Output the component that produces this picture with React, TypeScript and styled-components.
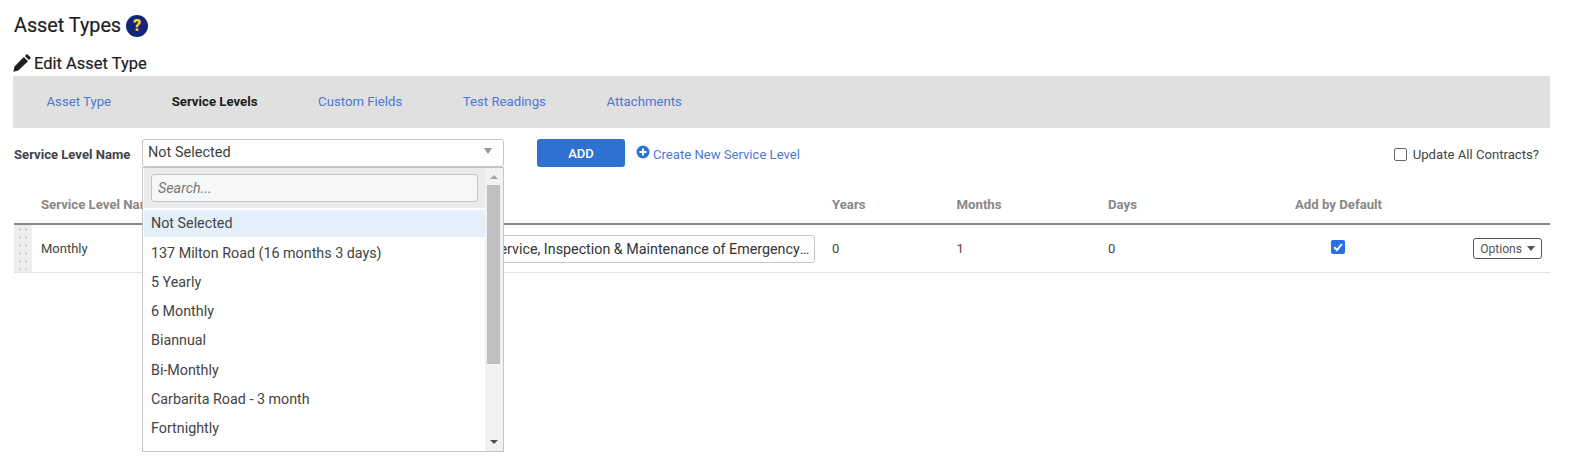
import styled, { createGlobalStyle } from "styled-components";

const tabs = ["Asset Type", "Service Levels", "Custom Fields", "Test Readings", "Attachments"];
const levels = [
  "137 Milton Road (16 months 3 days)",
  "5 Yearly",
  "6 Monthly",
  "Biannual",
  "Bi-Monthly",
  "Carbarita Road - 3 month",
  "Fortnightly",
];

const App = () => {
  return (
    <Page>
      <GlobalStyle />
      <Title>
        Asset Types
        <HelpIcon>?</HelpIcon>
      </Title>
      <SubTitle>
        <svg width="18" height="18" viewBox="0 0 18 18">
          <path
            fill="#1f1f1f"
            d="M10.8 3 15 7.2 5.3 16.6 0.4 17.8 1.5 12.5zM11.9 1.9 13.2.7c.5-.5 1.1-.5 1.6 0l2.4 2.4c.5.5.5 1.1 0 1.6l-1.2 1.3z"
          />
        </svg>
        Edit Asset Type
      </SubTitle>
      <TabBar>
        {tabs.map((tab) => (
          <Tab key={tab} $active={tab === "Service Levels"}>
            {tab}
          </Tab>
        ))}
      </TabBar>
      <FormRow>
        <FieldLabel>Service Level Name</FieldLabel>
        <SelectWrap>
          <SelectBox>
            Not Selected
            <SelectArrow />
          </SelectBox>
          <Dropdown>
            <OptionsPane>
              <SearchArea>
                <SearchInput placeholder="Search..." />
              </SearchArea>
              <OptionRow $selected>Not Selected</OptionRow>
              {levels.map((level) => (
                <OptionRow key={level}>{level}</OptionRow>
              ))}
            </OptionsPane>
            <ScrollTrack>
              <ScrollUp />
              <ScrollThumb />
              <ScrollDown />
            </ScrollTrack>
          </Dropdown>
        </SelectWrap>
        <AddButton>ADD</AddButton>
        <CreateLink>
          <svg width="14" height="14" viewBox="0 0 14 14">
            <circle cx="7" cy="7" r="6.5" fill="#2f71d0" />
            <path d="M7 3.5v7M3.5 7h7" stroke="#fff" strokeWidth="2" />
          </svg>
          <span>Create New Service Level</span>
        </CreateLink>
        <UpdateAll>
          <EmptyCheck />
          Update All Contracts?
        </UpdateAll>
      </FormRow>
      <HeadRow>
        <HeadName>Service Level Name</HeadName>
        <HeadCell>Years</HeadCell>
        <HeadCell>Months</HeadCell>
        <HeadCell>Days</HeadCell>
        <HeadCell>Add by Default</HeadCell>
      </HeadRow>
      <BodyRow>
        <DragHandle>
          <svg width="8" height="42" viewBox="0 0 8 42">
            {[0, 1, 2, 3, 4, 5].map((row) => (
              <g key={row} fill="#c9c9c9">
                <rect x="0" y={row * 8 + 0.5} width="2" height="2" />
                <rect x="6" y={row * 8 + 0.5} width="2" height="2" />
              </g>
            ))}
          </svg>
        </DragHandle>
        <NameCell>Monthly</NameCell>
        <DescCell>
          <DescBox>Service, Inspection &amp; Maintenance of Emergency and Exit Lighting</DescBox>
        </DescCell>
        <NumCell>0</NumCell>
        <NumCell $accent>1</NumCell>
        <NumCell>0</NumCell>
        <CheckCell>
          <CheckedBox>
            <svg width="10" height="10" viewBox="0 0 10 10">
              <path d="M1.2 5.2 4 8l4.8-6" fill="none" stroke="#fff" strokeWidth="2" />
            </svg>
          </CheckedBox>
        </CheckCell>
        <OptionsCell>
          <OptionsButton>
            Options
            <Caret />
          </OptionsButton>
        </OptionsCell>
      </BodyRow>
    </Page>
  );
};

const GlobalStyle = createGlobalStyle`
  html, body {
    margin: 0;
    padding: 0;
    background: #fff;
    font-family: Roboto, "Liberation Sans", sans-serif;
  }
`;

const Page = styled.div`
  width: 1584px;
  height: 468px;
  padding: 0 34px 0 13px;
  box-sizing: border-box;
  overflow: hidden;
`;

const Title = styled.div`
  display: flex;
  align-items: center;
  gap: 5px;
  height: 25px;
  margin: 13px 0 0 1px;
  font-size: 19.8px;
  font-weight: 400;
  -webkit-text-stroke: 0.2px #1e1e1e;
  color: #1e1e1e;
`;

const HelpIcon = styled.span`
  width: 22px;
  height: 22px;
  border-radius: 50%;
  background: #14267c;
  color: #f5d328;
  font-size: 16px;
  font-weight: 900;
  -webkit-text-stroke: 0;
  display: flex;
  align-items: center;
  justify-content: center;
`;

const SubTitle = styled.div`
  display: flex;
  align-items: center;
  gap: 3px;
  height: 22px;
  margin: 14px 0 2px 0;
  font-size: 16.5px;
  font-weight: 400;
  -webkit-text-stroke: 0.2px #1e1e1e;
  color: #1e1e1e;
`;

const TabBar = styled.div`
  display: flex;
  align-items: center;
  gap: 60.6px;
  height: 52px;
  padding: 0 0 2px 33.5px;
  box-sizing: border-box;
  background: #e0e0e0;
`;

const Tab = styled.div<{ $active?: boolean }>`
  font-size: 13.2px;
  font-weight: ${(p) => (p.$active ? 700 : 400)};
  color: ${(p) => (p.$active ? "#1c1c1c" : "#4f77d1")};
`;

const FormRow = styled.div`
  display: flex;
  align-items: flex-start;
  height: 60px;
  padding-top: 11px;
  box-sizing: border-box;
`;

const FieldLabel = styled.div`
  width: 128px;
  margin: 8px 0 0 1px;
  font-size: 13.1px;
  font-weight: 700;
  color: #444;
  white-space: nowrap;
`;

const SelectWrap = styled.div`
  position: relative;
  width: 362px;
`;

const SelectBox = styled.div`
  position: relative;
  height: 28px;
  padding: 4px 5px 0;
  box-sizing: border-box;
  border: 1px solid #c6c6c6;
  border-radius: 3px;
  font-size: 14.5px;
  color: #3f3f3f;
`;

const SelectArrow = styled.span`
  position: absolute;
  top: 8px;
  right: 11px;
  border-left: 4px solid transparent;
  border-right: 4px solid transparent;
  border-top: 6px solid #999;
`;

const Dropdown = styled.div`
  position: absolute;
  top: 28px;
  left: 0;
  z-index: 5;
  display: flex;
  width: 362px;
  height: 285px;
  box-sizing: border-box;
  border: 1px solid #c6c6c6;
  background: #fff;
  overflow: hidden;
`;

const OptionsPane = styled.div`
  flex: 1;
  min-width: 0;
`;

const SearchArea = styled.div`
  height: 40px;
  padding: 6px 7px 0 7px;
  margin: 0 0 2px 1px;
  box-sizing: border-box;
  background: #ebebeb;
`;

const SearchInput = styled.input`
  display: block;
  width: 100%;
  height: 28px;
  padding: 0 6px;
  box-sizing: border-box;
  border: 1px solid #c6c6c6;
  border-radius: 3px;
  background: #f6f7f8;
  font-family: inherit;
  font-size: 14.3px;
  font-style: italic;
  &::placeholder {
    color: #777;
  }
`;

const OptionRow = styled.div<{ $selected?: boolean }>`
  height: ${(p) => (p.$selected ? "27px" : "29.3px")};
  line-height: ${(p) => (p.$selected ? "27px" : "29.3px")};
  margin-left: 1px;
  margin-bottom: ${(p) => (p.$selected ? "1.5px" : "0")};
  padding-left: 7px;
  font-size: 14.3px;
  color: #444;
  background: ${(p) => (p.$selected ? "#e3effa" : "transparent")};
`;

const ScrollTrack = styled.div`
  position: relative;
  width: 18px;
  background: #f1f1f1;
`;

const ScrollUp = styled.span`
  position: absolute;
  top: 7px;
  left: 5px;
  border-left: 4px solid transparent;
  border-right: 4px solid transparent;
  border-bottom: 4px solid #a5a5a5;
`;

const ScrollDown = styled.span`
  position: absolute;
  bottom: 7px;
  left: 5px;
  border-left: 4px solid transparent;
  border-right: 4px solid transparent;
  border-top: 4px solid #505050;
`;

const ScrollThumb = styled.div`
  width: 13px;
  height: 179px;
  margin: 17px 0 0 2px;
  background: #bfbfbf;
`;

const AddButton = styled.button`
  width: 88px;
  height: 28px;
  margin-left: 33px;
  border: none;
  border-radius: 3px;
  background: #2f71d0;
  color: #fff;
  font-family: inherit;
  font-size: 13px;
  font-weight: 500;
`;

const CreateLink = styled.div`
  display: flex;
  align-items: flex-start;
  gap: 3px;
  margin: 6px 0 0 11px;
  font-size: 13.1px;
  color: #4f77d1;
  span {
    margin-top: 2px;
  }
`;

const UpdateAll = styled.div`
  display: flex;
  align-items: center;
  gap: 6px;
  margin: 8px 11px 0 auto;
  font-size: 13.15px;
  color: #444;
`;

const EmptyCheck = styled.span`
  width: 13px;
  height: 13px;
  box-sizing: border-box;
  border: 1px solid #666;
  border-radius: 2px;
`;

const HeadRow = styled.div`
  display: grid;
  grid-template-columns: 818px 124.5px 151.5px 187px 1fr;
  align-items: center;
  height: 37px;
  margin-left: 1px;
  padding-bottom: 2px;
  box-sizing: border-box;
  border-bottom: 2px solid #888;
`;

const HeadCell = styled.div`
  font-size: 13.2px;
  font-weight: 700;
  color: #888;
  white-space: nowrap;
`;

const HeadName = styled(HeadCell)`
  padding-left: 27px;
`;

const BodyRow = styled.div`
  display: grid;
  grid-template-columns: 18px 300px 500px 124.5px 151.5px 187px 120px 1fr;
  align-items: center;
  height: 48px;
  margin-left: 1px;
  box-sizing: border-box;
  border-bottom: 1px solid #e2e2e2;
  font-size: 13px;
  color: #444;
`;

const DragHandle = styled.div`
  display: flex;
  align-items: center;
  justify-content: center;
  height: 100%;
  background: #eee;
`;

const NameCell = styled.div`
  padding-left: 9px;
`;

const DescCell = styled.div`
  padding: 0 17px 0 152px;
`;

const DescBox = styled.div`
  height: 28px;
  line-height: 26px;
  padding: 0 2px 0 6px;
  box-sizing: border-box;
  border: 1px solid #c6c6c6;
  border-radius: 3px;
  font-size: 14.3px;
  color: #333;
  white-space: nowrap;
  overflow: hidden;
  text-overflow: ellipsis;
`;

const NumCell = styled.div<{ $accent?: boolean }>`
  color: ${(p) => (p.$accent ? "#7a2a4a" : "#444")};
`;

const CheckCell = styled.div`
  display: flex;
  padding: 0 0 4px 36px;
`;

const CheckedBox = styled.span`
  display: flex;
  align-items: center;
  justify-content: center;
  width: 14px;
  height: 14px;
  border-radius: 2px;
  background: #2a6fe8;
`;

const OptionsCell = styled.div`
  display: flex;
  justify-content: flex-end;
  padding-right: 8px;
`;

const OptionsButton = styled.div`
  display: flex;
  align-items: center;
  gap: 5px;
  height: 21px;
  padding: 0 6px;
  box-sizing: border-box;
  border: 1px solid #555;
  border-radius: 3px;
  font-size: 12.1px;
  color: #555;
`;

const Caret = styled.span`
  border-left: 4px solid transparent;
  border-right: 4px solid transparent;
  border-top: 5px solid #555;
`;

export default App;
